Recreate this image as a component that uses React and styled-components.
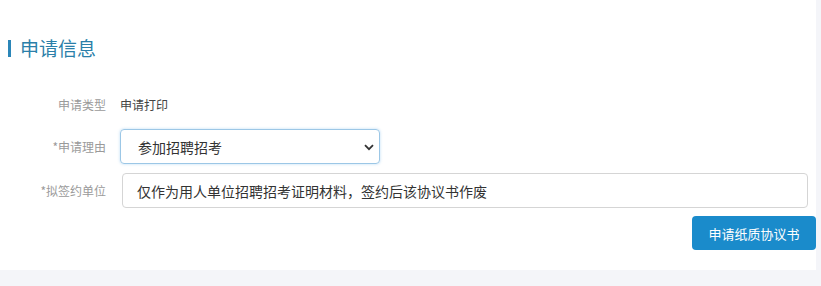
import React from "react";
import styled, { createGlobalStyle } from "styled-components";

const GlobalStyle = createGlobalStyle`
  html, body {
    margin: 0;
    padding: 0;
    background: #f4f5f9;
    font-family: "Microsoft YaHei", "Noto Sans CJK SC", "Liberation Sans", sans-serif;
  }
`;

const Page = styled.div`
  width: 821px;
  height: 286px;
  background: #f4f5f9;
`;

const Panel = styled.section`
  width: 816px;
  height: 270px;
  background: #fff;
  box-sizing: border-box;
  padding-top: 37px;
`;

const Title = styled.h2`
  margin: 0 0 0 8px;
  display: flex;
  align-items: center;
  gap: 9px;
  height: 22px;
  font-size: 19px;
  font-weight: normal;
  color: #2b7fa9;
  line-height: 22px;

  &::before {
    content: "";
    width: 3px;
    height: 17px;
    background: #2b86b8;
  }
`;

const Form = styled.div`
  display: flex;
  flex-direction: column;
  margin-top: 33px;
`;

const Row = styled.div`
  display: grid;
  grid-template-columns: 106px 1fr;
  column-gap: ${(p) => p.$gap || 14}px;
  align-items: center;
  height: ${(p) => p.$h}px;
  margin-bottom: ${(p) => p.$mb || 0}px;
`;

const Label = styled.label`
  text-align: right;
  font-size: 12px;
  color: #9a9a9a;
`;

const Value = styled.span`
  font-size: 12px;
  color: #444;
`;

const SelectBox = styled.div`
  position: relative;
  width: 260px;
  height: 35px;
  box-sizing: border-box;
  border: 1px solid #9cc7e6;
  border-radius: 4px;
  box-shadow: 0 0 3px rgba(102, 175, 233, 0.45);
  display: flex;
  align-items: center;
  padding-left: 17px;
  font-size: 14px;
  color: #333;
`;

const Chevron = styled.svg`
  position: absolute;
  right: 5px;
  top: 14px;
`;

const Input = styled.div`
  width: 686px;
  height: 35px;
  box-sizing: border-box;
  border: 1px solid #d5d5d5;
  border-radius: 4px;
  display: flex;
  align-items: center;
  padding-left: 14px;
  font-size: 14px;
  color: #333;
`;

const Actions = styled.div`
  display: flex;
  justify-content: flex-end;
`;

const Button = styled.button`
  width: 124px;
  height: 34px;
  border: none;
  border-radius: 4px;
  background: #1a8bcb;
  color: #fff;
  font-family: inherit;
  font-size: 13px;
  padding: 0;
`;

export default function App() {
  return (
    <Page>
      <GlobalStyle />
      <Panel>
        <Title>申请信息</Title>
        <Form>
          <Row $h={24} $mb={13}>
            <Label>申请类型</Label>
            <Value>申请打印</Value>
          </Row>
          <Row $h={35} $mb={9}>
            <Label>*申请理由</Label>
            <SelectBox>
              参加招聘招考
              <Chevron width="10" height="7" viewBox="0 0 10 7">
                <path d="M1 1.2 L5 5.2 L9 1.2" fill="none" stroke="#333" strokeWidth="1.8" />
              </Chevron>
            </SelectBox>
          </Row>
          <Row $h={35} $mb={8} $gap={16}>
            <Label>*拟签约单位</Label>
            <Input>仅作为用人单位招聘招考证明材料，签约后该协议书作废</Input>
          </Row>
          <Actions>
            <Button>申请纸质协议书</Button>
          </Actions>
        </Form>
      </Panel>
    </Page>
  );
}
